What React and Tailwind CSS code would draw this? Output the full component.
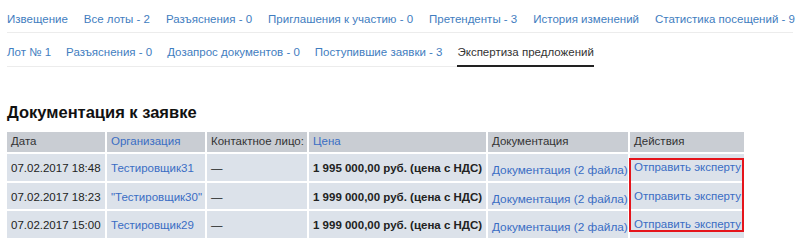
import React from 'react';

const topTabs = [
  'Извещение',
  'Все лоты - 2',
  'Разъяснения - 0',
  'Приглашения к участию - 0',
  'Претенденты - 3',
  'История изменений',
  'Статистика посещений - 9',
];

const lotTabs = [
  { label: 'Лот № 1' },
  { label: 'Разъяснения - 0' },
  { label: 'Дозапрос документов - 0' },
  { label: 'Поступившие заявки - 3' },
  { label: 'Экспертиза предложений', active: true },
];

const rows = [
  { date: '07.02.2017 18:48', org: 'Тестировщик31', price: '1 995 000,00 руб. (цена с НДС)' },
  { date: '07.02.2017 18:23', org: '"Тестировщик30"', price: '1 999 000,00 руб. (цена с НДС)' },
  { date: '07.02.2017 15:00', org: 'Тестировщик29', price: '1 999 000,00 руб. (цена с НДС)' },
];

const th = 'font-normal text-left px-[4px] border-x-2 border-white whitespace-nowrap overflow-hidden';
const td = 'px-[4px] border-x-2 border-white align-top whitespace-nowrap overflow-hidden';

const App = () => {
  return (
    <div className="bg-white px-[7px] font-['Liberation_Sans',Arial,sans-serif] text-[11.5px] text-[#222] w-[800px] h-[246px] overflow-hidden">
      {/* ── Procedure tabs ─────────────────────────────────────────── */}
      <div className="flex gap-[16px] whitespace-nowrap border-b border-[#ececec] pt-[11px] pb-[5px] w-[786px]">
        {topTabs.map((t) => (
          <a key={t} className="text-[#3f7dc0] leading-[16px] shrink-0">
            {t}
          </a>
        ))}
      </div>

      {/* ── Lot tabs ───────────────────────────────────────────────── */}
      <div className="inline-flex gap-[15px] whitespace-nowrap border-b border-[#ececec] mt-[11px]">
        {lotTabs.map((t) => (
          <a
            key={t.label}
            className={
              t.active
                ? 'text-[#333] leading-[16px] pb-[5px] border-b-2 border-[#222] -mb-px'
                : 'text-[#3f7dc0] leading-[16px] pb-[6px]'
            }
          >
            {t.label}
          </a>
        ))}
      </div>

      <h2 className="font-bold text-[16.5px] text-[#111] leading-[20px] mt-[35px]">
        Документация к заявке
      </h2>

      {/* ── Applications table ─────────────────────────────────────── */}
      <div className="relative mt-[10px] w-[737px]">
        <table className="table-fixed border-collapse w-[737px]">
          <colgroup>
            <col className="w-[99px]" />
            <col className="w-[100px]" />
            <col className="w-[102px]" />
            <col className="w-[179px]" />
            <col className="w-[142px]" />
            <col className="w-[115px]" />
          </colgroup>
          <thead>
            <tr className="bg-[#c9cdd3] h-[21px]">
              <th className={`${th} border-l-0 text-[#333]`}>Дата</th>
              <th className={`${th} text-[#3a6dc4]`}>Организация</th>
              <th className={`${th} text-[#333]`}>Контактное лицо:</th>
              <th className={`${th} text-[#3a6dc4]`}>Цена</th>
              <th className={`${th} text-[#333]`}>Документация</th>
              <th className={`${th} border-r-0 text-[#333]`}>Действия</th>
            </tr>
          </thead>
          <tbody>
            {rows.map((r, i) => (
              <tr key={r.date} className={`bg-[#dce2ea] border-t-2 border-white ${i === 0 ? 'h-[29px]' : 'h-[28px]'}`}>
                <td className={`${td} border-l-0 pt-[6px]`}>{r.date}</td>
                <td className={`${td} pt-[6px]`}>
                  <a className="text-[#3a6dc4]">{r.org}</a>
                </td>
                <td className={`${td} pt-[6px]`}>—</td>
                <td className={`${td} pt-[6px] font-bold`}>{r.price}</td>
                <td className={`${td} pt-[8px]`}>
                  <a className="text-[#3a6dc4] text-[11.8px]">Документация (2 файла)</a>
                </td>
                <td className={`${td} border-r-0 pt-[5px]`}>
                  <a className="text-[#3a6dc4]">Отправить эксперту</a>
                </td>
              </tr>
            ))}
          </tbody>
        </table>
        {/* highlight frame over the actions column */}
        <div className="absolute left-[622px] top-[26px] w-[115px] h-[74px] border-2 border-[#e5141b] pointer-events-none" />
      </div>
    </div>
  );
};

export default App;
